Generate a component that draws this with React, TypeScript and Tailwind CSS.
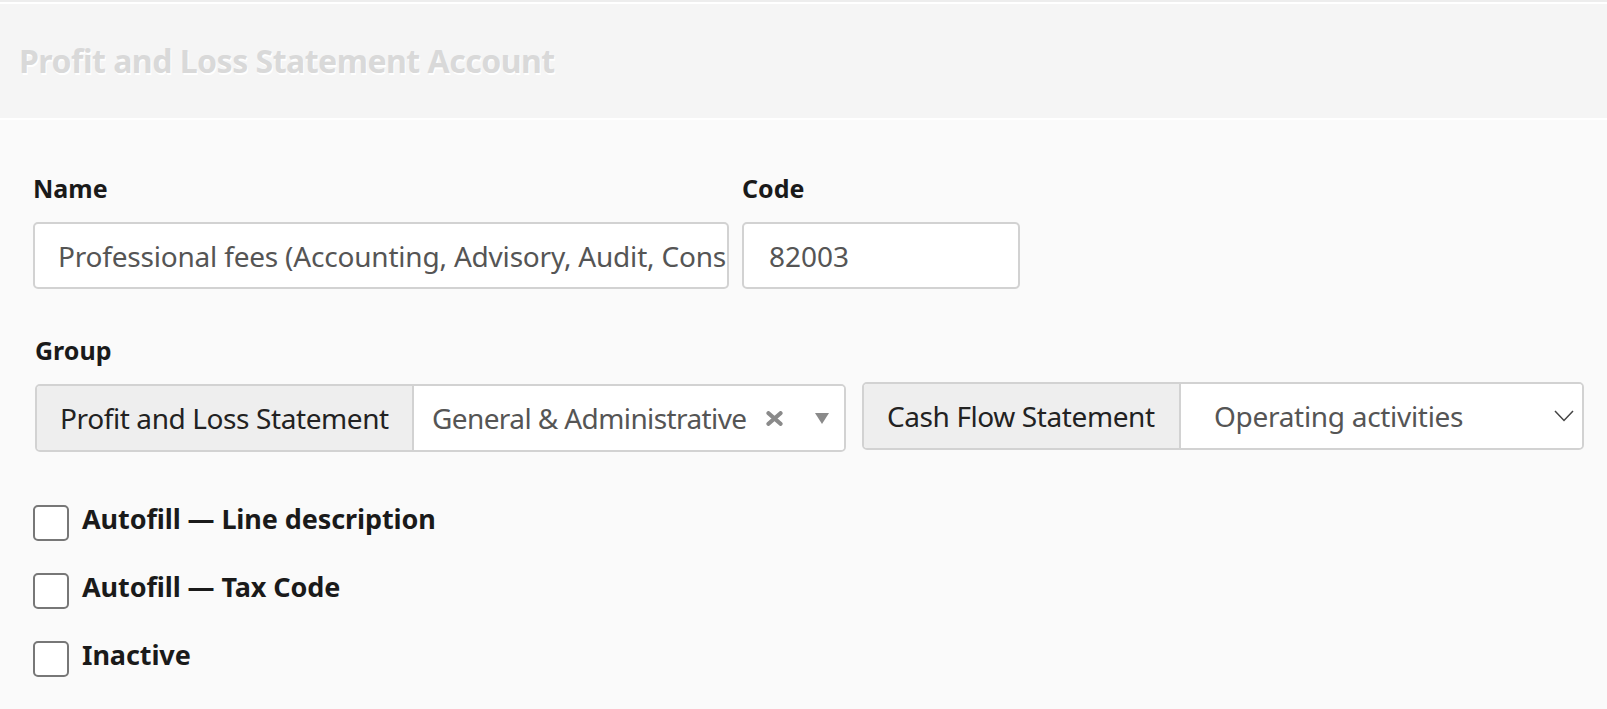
import React from 'react';

const Checkbox: React.FC<{ label: string }> = ({ label }) => (
  <label className="flex items-center gap-[13px]">
    <span className="w-[36px] h-[36px] rounded-[5px] border-2 border-[#777777] bg-white shrink-0" />
    <span className="text-[27px] font-bold text-[#1a1a1a] leading-none -translate-y-[5px] tracking-[-0.1px]">
      {label}
    </span>
  </label>
);

const FieldLabel: React.FC<{ children: React.ReactNode }> = ({ children }) => (
  <span className="block text-[25px] font-bold text-[#1a1a1a] leading-none">{children}</span>
);

const App: React.FC = () => {
  return (
    <div className="w-[1607px] h-[709px] bg-[#fafafa] overflow-hidden font-['Noto_Sans',sans-serif]">
      <div className="h-[2px] bg-[#ededed]" />
      <div className="h-[2px] bg-white" />
      <div className="h-[114px] bg-[#f5f5f5] flex items-center px-[19px]">
        <h1 className="text-[32px] font-bold text-[#d9d9d9] leading-none [text-shadow:1px_2px_0_#ffffff] tracking-[-0.5px]">
          Profit and Loss Statement Account
        </h1>
      </div>
      <div className="h-[2px] bg-white" />

      <div className="pl-[33px] pt-[56px]">
        {/* name + code */}
        <div className="flex gap-[13px]">
          <div className="flex flex-col gap-[21px]">
            <FieldLabel>Name</FieldLabel>
            <div className="w-[696px] h-[67px] bg-white border-2 border-[#d2d2d2] rounded-[5px] flex items-center pl-[23px] overflow-hidden">
              <span className="block min-w-0 flex-1 overflow-hidden text-[28px] text-[#555555] whitespace-nowrap tracking-[-0.2px]">
                Professional fees (Accounting, Advisory, Audit, Consulting)
              </span>
            </div>
          </div>
          <div className="flex flex-col gap-[21px]">
            <FieldLabel>Code</FieldLabel>
            <div className="w-[278px] h-[67px] bg-white border-2 border-[#d2d2d2] rounded-[5px] flex items-center px-[25px]">
              <span className="text-[28px] text-[#555555]">82003</span>
            </div>
          </div>
        </div>

        {/* group */}
        <div className="mt-[49px] pl-[2px]">
          <FieldLabel>Group</FieldLabel>
          <div className="mt-[21px] flex items-start gap-[16px]">
            <div className="w-[811px] h-[68px] flex border-2 border-[#d2d2d2] rounded-[5px] overflow-hidden">
              <div className="w-[377px] bg-[#eeeeee] border-r-2 border-[#d2d2d2] flex items-center pl-[23px]">
                <span className="text-[28px] text-[#222222] whitespace-nowrap tracking-[-0.4px]">
                  Profit and Loss Statement
                </span>
              </div>
              <div className="flex-1 bg-white flex items-center pl-[18px] pr-[15px]">
                <span className="flex-1 text-[28px] text-[#555555] whitespace-nowrap tracking-[-0.6px]">
                  General &amp; Administrative
                </span>
                <svg width="17" height="15" viewBox="0 0 17 15" className="mr-[32px] shrink-0">
                  <path d="M2.5 2.2 L14.5 12.8 M14.5 2.2 L2.5 12.8" stroke="#8a8a8a" strokeWidth="4.2" strokeLinecap="round" />
                </svg>
                <svg width="14" height="11" viewBox="0 0 14 11" className="shrink-0">
                  <path d="M0 0 H14 L7 11 Z" fill="#8a8a8a" />
                </svg>
              </div>
            </div>

            <div className="w-[722px] h-[68px] -mt-[2px] flex border-2 border-[#d2d2d2] rounded-[5px] overflow-hidden">
              <div className="w-[317px] bg-[#eeeeee] border-r-2 border-[#d2d2d2] flex items-center pl-[23px]">
                <span className="text-[28px] text-[#222222] whitespace-nowrap tracking-[-0.4px]">
                  Cash Flow Statement
                </span>
              </div>
              <div className="flex-1 bg-white flex items-center pl-[33px] pr-[8px]">
                <span className="flex-1 text-[28px] text-[#555555] whitespace-nowrap tracking-[-0.3px]">
                  Operating activities
                </span>
                <svg width="20" height="12" viewBox="0 0 20 12" fill="none" className="shrink-0">
                  <path d="M1 1 L10 10.5 L19 1" stroke="#444444" strokeWidth="1.5" />
                </svg>
              </div>
            </div>
          </div>
        </div>

        {/* flags */}
        <div className="mt-[53px] flex flex-col gap-[32px]">
          <Checkbox label="Autofill — Line description" />
          <Checkbox label="Autofill — Tax Code" />
          <Checkbox label="Inactive" />
        </div>
      </div>
    </div>
  );
};

export default App;
